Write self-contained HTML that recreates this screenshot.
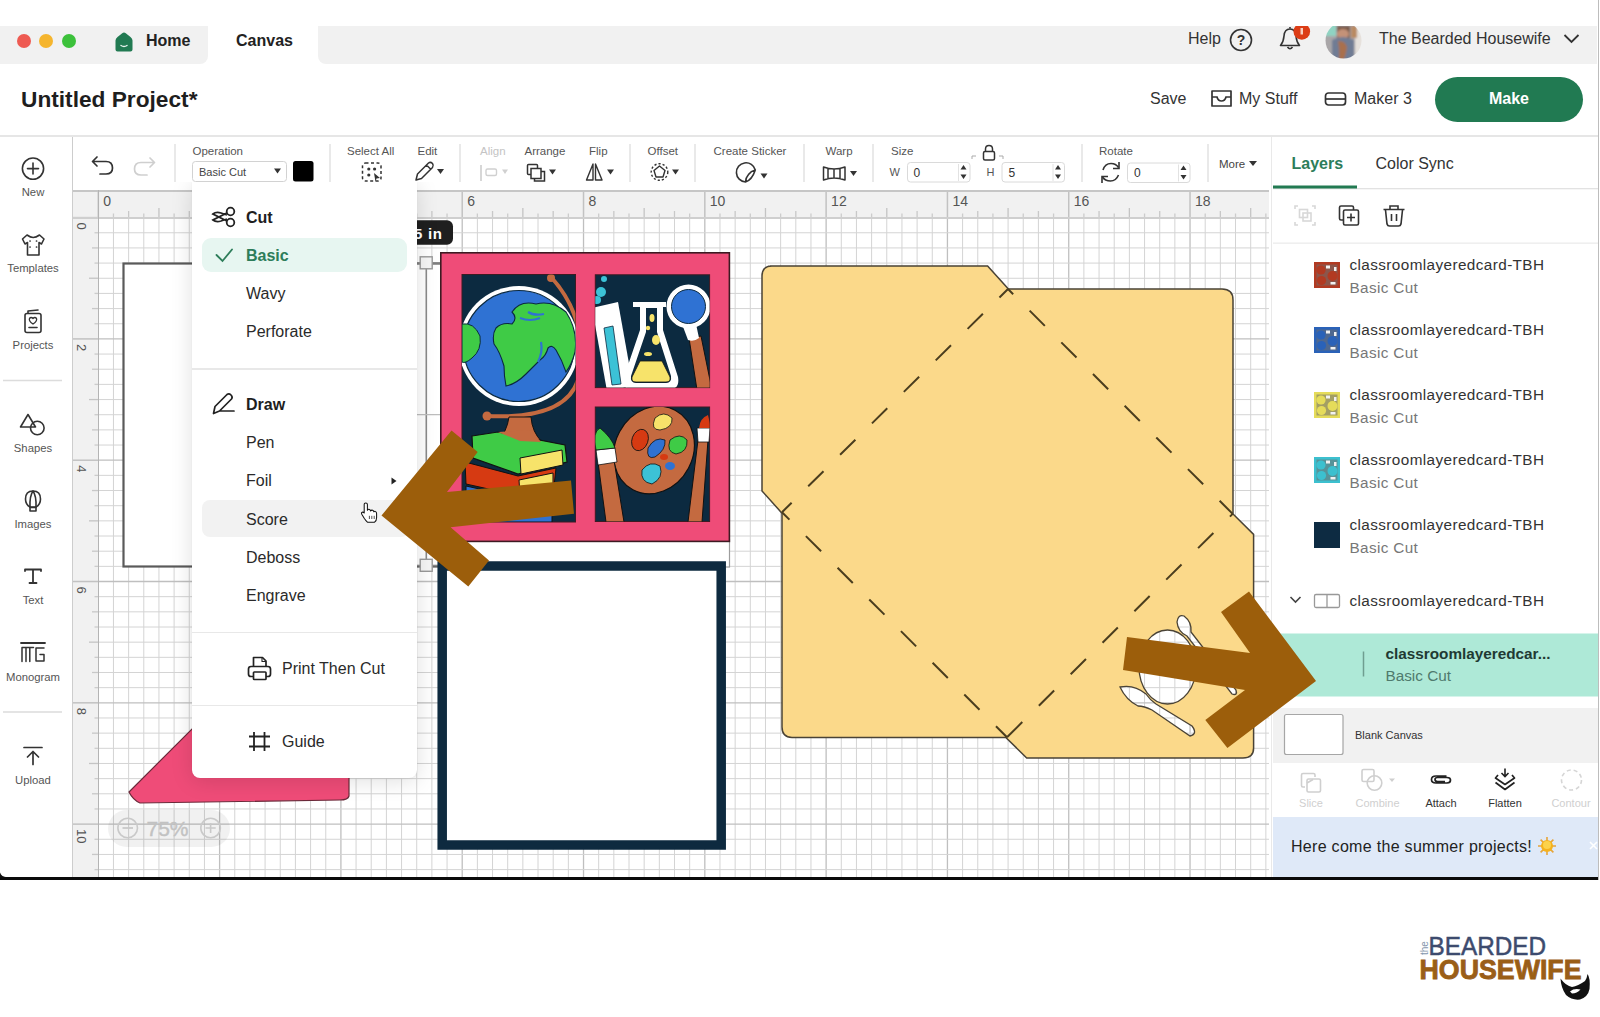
<!DOCTYPE html>
<html><head><meta charset="utf-8">
<style>
*{margin:0;padding:0;box-sizing:border-box}
html,body{width:1600px;height:1017px;overflow:hidden;background:#fff;font-family:"Liberation Sans",sans-serif;color:#222}
.a{position:absolute}
.t{position:absolute;white-space:nowrap;line-height:1}
svg{position:absolute;overflow:visible}
</style></head><body>
<!-- TAB BAR -->
<div class="a" style="left:0;top:26px;width:1599px;height:38px;background:#f1f1f1"></div>
<div class="a" style="left:208px;top:26px;width:110px;height:38px;background:#fff"></div>
<div class="a" style="left:200px;top:56px;width:8px;height:8px;background:#fff"></div>
<div class="a" style="left:200px;top:56px;width:8px;height:8px;background:#f1f1f1;border-bottom-right-radius:8px"></div>
<div class="a" style="left:318px;top:56px;width:8px;height:8px;background:#fff"></div>
<div class="a" style="left:318px;top:56px;width:8px;height:8px;background:#f1f1f1;border-bottom-left-radius:8px"></div>
<div class="a" style="left:1597px;top:0;width:3px;height:880px;background:#fff"></div>
<div class="a" style="left:1598px;top:0;width:1px;height:880px;background:#bdbdbd"></div>
<div class="a" style="left:17px;top:34px;width:14px;height:14px;border-radius:50%;background:#ee5a52"></div>
<div class="a" style="left:39px;top:34px;width:14px;height:14px;border-radius:50%;background:#f5b52e"></div>
<div class="a" style="left:62px;top:34px;width:14px;height:14px;border-radius:50%;background:#3cc13b"></div>
<svg style="left:113px;top:31px" width="22" height="22" viewBox="0 0 22 22"><path d="M2.5 9.5 Q2.5 7.5 4.5 6 L9.2 2.2 Q11 0.8 12.8 2.2 L17.5 6 Q19.5 7.5 19.5 9.5 V18.5 Q19.5 20.5 17.5 20.5 H4.5 Q2.5 20.5 2.5 18.5 Z" fill="#217a52"/><path d="M8 14.5 Q11 16.5 14 14.5" stroke="#e8f3ee" stroke-width="1.4" fill="none" stroke-linecap="round"/></svg>
<div class="t" style="left:146px;top:33px;font-size:16px;font-weight:bold;color:#222">Home</div>
<div class="t" style="left:236px;top:33px;font-size:16px;font-weight:bold;color:#222">Canvas</div>
<div class="t" style="left:1188px;top:31px;font-size:16px;color:#333">Help</div>
<svg style="left:1229px;top:28px" width="24" height="24" viewBox="0 0 24 24"><circle cx="12" cy="12" r="10.5" fill="none" stroke="#333" stroke-width="1.6"/><text x="12" y="17" text-anchor="middle" font-size="14" font-weight="bold" fill="#333" font-family="Liberation Sans">?</text></svg>
<svg style="left:1270px;top:20px" width="100" height="45" viewBox="1270 20 100 45">
<defs><clipPath id="bar"><rect x="1270" y="26" width="100" height="40"/></clipPath>
<clipPath id="av"><circle cx="1343.5" cy="40.5" r="18"/></clipPath>
<filter id="bl"><feGaussianBlur stdDeviation="1"/></filter></defs>
<g clip-path="url(#bar)">
<path d="M1280.5 45.5 Q1283.5 42 1284 36 Q1284.5 29 1290 29 Q1295.5 29 1296 36 Q1296.5 42 1299.5 45.5 Z" fill="none" stroke="#333" stroke-width="1.6" stroke-linejoin="round"/>
<path d="M1287.5 47 Q1290 50.5 1292.5 47" fill="none" stroke="#333" stroke-width="1.6"/>
<path d="M1290 28.5 V27" stroke="#333" stroke-width="1.6"/>
<circle cx="1301.8" cy="31.5" r="8.3" fill="#dc3d16"/>
<path d="M1300.5 28 h2.5 v6.5 h-2.5z" fill="#f7d0c0"/>
<g clip-path="url(#av)"><g filter="url(#bl)">
<rect x="1324" y="20" width="40" height="42" fill="#a9a6a8"/>
<rect x="1324" y="20" width="12" height="16" fill="#8fd3c2"/>
<rect x="1355" y="26" width="10" height="32" fill="#e6e1dc"/>
<rect x="1351" y="26" width="6" height="12" fill="#b98a62"/>
<rect x="1337" y="26" width="13" height="12" fill="#7a5a48"/>
<ellipse cx="1343" cy="34" rx="6" ry="5" fill="#c49278"/>
<path d="M1332 40 Q1343 34 1354 40 V60 H1332 Z" fill="#6f7c94"/>
<path d="M1338 41 Q1345 40 1347 47 Q1346 56 1343 60 H1339 Q1340 50 1338 41 Z" fill="#a9704e"/>
</g></g>
</g>
</svg>
<div class="t" style="left:1379px;top:31px;font-size:16px;color:#333">The Bearded Housewife</div>
<svg style="left:1563px;top:33px" width="17" height="11" viewBox="0 0 17 11"><path d="M1.5 2 L8.5 9 L15.5 2" fill="none" stroke="#333" stroke-width="1.8"/></svg>

<!-- HEADER -->
<div class="t" style="left:21px;top:88px;font-size:22.7px;font-weight:bold;color:#1e1e1e">Untitled Project*</div>
<div class="t" style="left:1150px;top:91px;font-size:16px;color:#333">Save</div>
<svg style="left:1210px;top:89px" width="23" height="19" viewBox="0 0 23 19"><path d="M2 2 H21 V17 H2 Z" fill="none" stroke="#333" stroke-width="1.7" stroke-linejoin="round"/><path d="M2 8 H7 Q8 12 11.5 12 Q15 12 16 8 H21" fill="none" stroke="#333" stroke-width="1.7"/></svg>
<div class="t" style="left:1239px;top:91px;font-size:16px;color:#333">My Stuff</div>
<svg style="left:1324px;top:91px" width="23" height="16" viewBox="0 0 23 16"><rect x="1.5" y="2" width="20" height="12" rx="3" fill="none" stroke="#333" stroke-width="1.7"/><path d="M1.5 8 H21.5" stroke="#333" stroke-width="1.7"/></svg>
<div class="t" style="left:1354px;top:91px;font-size:16px;color:#333">Maker 3</div>
<div class="a" style="left:1435px;top:77px;width:148px;height:45px;border-radius:23px;background:#217a52"></div>
<div class="t" style="left:1435px;top:91px;width:148px;text-align:center;font-size:16px;font-weight:bold;color:#fff">Make</div>
<div class="a" style="left:0;top:135px;width:1598px;height:2px;background:#e6e6e6"></div>

<!-- LEFT SIDEBAR -->
<div class="a" style="left:72px;top:137px;width:1.2px;height:740px;background:#cdcdcd"></div>
<svg style="left:0;top:136px" width="72" height="741" viewBox="0 136 72 741" font-family="Liberation Sans">
<g fill="none" stroke="#333" stroke-width="1.6" stroke-linejoin="round" stroke-linecap="round">
  <circle cx="33" cy="168.6" r="10.6"/>
  <path d="M27.5 168.6 H38.5 M33 163 V174"/>
  <path d="M27 235 L22.5 239 L25 244 L27.5 242.5 V255 H39 V242.5 L41.5 244 L44 239 L39.5 235 Q36 237.5 33.2 237.5 Q30.5 237.5 27 235 Z"/>
  <path d="M30 241 h0.1 M36.5 241 h0.1 M30 247 h0.1 M36.5 247 h0.1" stroke-width="1.7"/>
  <rect x="25" y="313.5" width="16" height="19" rx="2"/>
  <path d="M28 313 L28 311 L38 310" />
  <path d="M29 327.5 H37"/>
  <path d="M33 324 Q28.5 321 29.5 318.5 Q31 316.5 33 318.5 Q35 316.5 36.5 318.5 Q37.5 321 33 324 Z" stroke-width="1.3"/>
  <path d="M28 414.5 L20.5 427 H35.5 Z"/>
  <circle cx="37.3" cy="428" r="6.8"/>
  <path d="M33 491 Q25.5 491 25.5 499 Q25.5 504.5 30 507 H36 Q40.5 504.5 40.5 499 Q40.5 491 33 491 Z"/>
  <path d="M33 491 Q29.5 496 30 507 M33 491 Q36.5 496 36 507"/>
  <path d="M30 507.5 H36 V511 H30 Z"/>
  <path d="M25 571 V569.5 H41 V571 M33 569.5 V583 M29.5 583 H36.5" stroke-width="1.8"/>
  <path d="M21 643 H45" stroke-width="1.8"/>
  <path d="M22 661.5 V647.5 H33.5 M26 661.5 V648 M29.8 661.5 V648 M22 661.5 h0" stroke-width="1.5"/>
  <path d="M44 648 H36 V661 H44 V654.5 H40" stroke-width="1.5"/>
  <path d="M24 747.5 H42" stroke-width="1.7"/>
  <path d="M33 764.5 V752 M27.5 757 L33 751.5 L38.5 757" stroke-width="1.7"/>
</g>
<g fill="#555" font-size="11.3" text-anchor="middle">
  <text x="33" y="196.3">New</text>
  <text x="33" y="272">Templates</text>
  <text x="33" y="348.5">Projects</text>
  <text x="33" y="451.5">Shapes</text>
  <text x="33" y="527.5">Images</text>
  <text x="33" y="604">Text</text>
  <text x="33" y="680.5">Monogram</text>
  <text x="33" y="783.5">Upload</text>
</g>
<path d="M3 380.5 H62 M3 712 H62" stroke="#dcdcdc" stroke-width="1.3"/>
</svg>


<!-- TOOLBAR -->
<svg style="left:73px;top:137px" width="1199" height="53" viewBox="73 137 1199 53" font-family="Liberation Sans">
<path d="M175 144 V182 M330 144 V182 M460 144 V182 M630 144 V182 M695 144 V182 M804 144 V182 M873 144 V182 M1082 144 V182 M1208 144 V182" stroke="#dedede" stroke-width="1.3"/>
<g fill="#555" font-size="11.5">
  <text x="192.5" y="154.5">Operation</text>
  <text x="347" y="154.5">Select All</text>
  <text x="417.5" y="154.5">Edit</text>
  <text x="480" y="154.5" fill="#c4c4c4">Align</text>
  <text x="524.5" y="154.5">Arrange</text>
  <text x="589" y="154.5">Flip</text>
  <text x="647.5" y="154.5">Offset</text>
  <text x="713.5" y="154.5">Create Sticker</text>
  <text x="825.5" y="154.5">Warp</text>
  <text x="891" y="154.5">Size</text>
  <text x="1099" y="154.5">Rotate</text>
  <text x="1219" y="167.5" fill="#444">More</text>
</g>
<!-- undo / redo -->
<path d="M97 162 L92.5 166.5 L97 171 M93 166.5 H106 Q112.5 166.5 112.5 173 Q112.5 179 106 179 H100" fill="none" stroke="#333" stroke-width="1.7" stroke-linecap="round" stroke-linejoin="round" transform="translate(0 -5)"/>
<path d="M150 158 L154.5 162.5 L150 167 M154 162.5 H141 Q134.5 162.5 134.5 169 Q134.5 175 141 175 H147" fill="none" stroke="#cfcfcf" stroke-width="1.7" stroke-linecap="round" stroke-linejoin="round"/>
<!-- operation dropdown -->
<rect x="192.5" y="161.5" width="94" height="20" rx="3" fill="#fff" stroke="#d2d2d2" stroke-width="1"/>
<text x="199" y="175.5" font-size="11" fill="#444">Basic Cut</text>
<path d="M274 168.5 H281 L277.5 173.5 Z" fill="#333"/>
<rect x="293" y="161" width="20.5" height="20.5" rx="2.5" fill="#000"/>
<!-- select all -->
<rect x="362.5" y="163" width="18.5" height="18" rx="3" fill="none" stroke="#333" stroke-width="1.5" stroke-dasharray="3 2.5"/>
<circle cx="368.8" cy="169" r="1.6" fill="#333"/><circle cx="374.6" cy="169" r="1.6" fill="#333"/><circle cx="368.8" cy="175" r="1.6" fill="#333"/>
<path d="M374 173 L380 178 L376.5 178.5 L375.5 182 Z" fill="#333"/>
<!-- edit pencil -->
<path d="M416 180 L417.5 174 L428.5 163 Q430.5 161.5 432.5 163.5 Q434 165.5 432.5 167.5 L421.5 178.5 Z M426.5 165 L430.5 169" fill="none" stroke="#333" stroke-width="1.5" stroke-linejoin="round"/>
<path d="M437 169 H444 L440.5 174 Z" fill="#333"/>
<!-- align -->
<path d="M481 165 V181" stroke="#d0d0d0" stroke-width="1.7"/>
<rect x="486" y="169" width="10.5" height="6.5" rx="1.5" fill="none" stroke="#d0d0d0" stroke-width="1.4"/>
<path d="M502 169.5 H508 L505 174 Z" fill="#d0d0d0"/>
<!-- arrange -->
<rect x="527.5" y="164.5" width="10" height="10" rx="1" fill="none" stroke="#333" stroke-width="1.5"/>
<path d="M531 168.5 H541 V178.5 H531 Z" fill="#fff" stroke="#333" stroke-width="1.5"/>
<path d="M534.5 178.5 V181 H544.5 V171.5 H541" fill="none" stroke="#333" stroke-width="1.5"/>
<path d="M549 169.5 H556 L552.5 174.5 Z" fill="#333"/>
<!-- flip -->
<path d="M593 164 L586.5 180 H593 Z M595.5 164 L602 180 H595.5 Z" fill="none" stroke="#333" stroke-width="1.4" stroke-linejoin="round"/>
<path d="M607 169.5 H614 L610.5 174.5 Z" fill="#333"/>
<!-- offset -->
<path d="M659.5 166 L665 170.5 L663 177 H656 L654 170.5 Z" fill="none" stroke="#333" stroke-width="1.4" stroke-linejoin="round"/>
<circle cx="659.5" cy="172" r="8.3" fill="none" stroke="#333" stroke-width="1.4" stroke-dasharray="2.2 2"/>
<path d="M672 169.5 H679 L675.5 174.5 Z" fill="#333"/>
<!-- create sticker -->
<path d="M745.5 182 A9.6 9.6 0 1 1 755.3 170 Q751 171 748.5 174.5 Q745.5 178 745.5 182 Z M745.5 182 Q752 180 755.3 170" fill="none" stroke="#333" stroke-width="1.6" stroke-linejoin="round"/>
<path d="M760.5 173.5 H767.5 L764 178.5 Z" fill="#333"/>
<!-- warp -->
<path d="M823.5 167 Q834 171 845 167 V180 Q834 176 823.5 180 Z M823.5 167 V180 M828 168.5 V178.5 M834 169.5 V177.5 M840 168.5 V178.5" fill="none" stroke="#333" stroke-width="1.5" stroke-linejoin="round"/>
<path d="M850 171 H857 L853.5 176 Z" fill="#333"/>
<!-- size -->
<text x="889.5" y="175.5" font-size="11" fill="#555">W</text>
<rect x="907.5" y="162.5" width="62.5" height="19.5" rx="3" fill="#fff" stroke="#dadada"/>
<text x="913.5" y="176.5" font-size="12" fill="#333">0</text>
<path d="M958.5 164 V181" stroke="#e2e2e2"/>
<path d="M960.5 169.5 L963.5 165 L966.5 169.5 Z M960.5 174.5 L963.5 179 L966.5 174.5 Z" fill="#333"/>
<path d="M972 159 V156 H976 M999 156 H1003 V159" fill="none" stroke="#aaa" stroke-width="1"/>
<rect x="983.5" y="151.5" width="11" height="8.5" rx="1.5" fill="none" stroke="#333" stroke-width="1.5"/>
<path d="M985.5 151.5 V149 Q985.5 145.5 989 145.5 Q992.5 145.5 992.5 149 V151.5" fill="none" stroke="#333" stroke-width="1.5"/>
<text x="986.5" y="175.5" font-size="11" fill="#555">H</text>
<rect x="1002" y="162.5" width="62.5" height="19.5" rx="3" fill="#fff" stroke="#dadada"/>
<text x="1008.5" y="176.5" font-size="12" fill="#333">5</text>
<path d="M1053 164 V181" stroke="#e2e2e2"/>
<path d="M1055 169.5 L1058 165 L1061 169.5 Z M1055 174.5 L1058 179 L1061 174.5 Z" fill="#333"/>
<!-- rotate -->
<path d="M1103 170 Q1105 163.5 1111 163.5 Q1116 163.5 1118.5 167.5 M1118.5 175 Q1116 181 1110.5 181 Q1105 181 1102.5 177" fill="none" stroke="#333" stroke-width="1.6"/>
<path d="M1119 162 V168.5 H1113 M1102 183 V176.5 H1108" fill="none" stroke="#333" stroke-width="1.6"/>
<rect x="1127.5" y="163" width="62.5" height="19.5" rx="3" fill="#fff" stroke="#dadada"/>
<text x="1134" y="177" font-size="12" fill="#333">0</text>
<path d="M1178.5 164.5 V181.5" stroke="#e2e2e2"/>
<path d="M1180.5 170 L1183.5 165.5 L1186.5 170 Z M1180.5 175 L1183.5 179.5 L1186.5 175 Z" fill="#333"/>
<path d="M1249 161 H1257 L1253 166 Z" fill="#333"/>
</svg>


<!-- CANVAS -->
<div class="a" style="left:73px;top:190px;width:1195.5px;height:687px;background:#fff;overflow:hidden">
  <svg style="left:-1px;top:0" width="1200" height="700"><line x1="26.30" y1="0" x2="26.30" y2="700" stroke="#bfbfbf" stroke-width="1.3"/>
<line x1="41.46" y1="0" x2="41.46" y2="700" stroke="#d4d4d4" stroke-width="1"/>
<line x1="56.63" y1="0" x2="56.63" y2="700" stroke="#d4d4d4" stroke-width="1"/>
<line x1="71.79" y1="0" x2="71.79" y2="700" stroke="#d4d4d4" stroke-width="1"/>
<line x1="86.95" y1="0" x2="86.95" y2="700" stroke="#d4d4d4" stroke-width="1"/>
<line x1="102.12" y1="0" x2="102.12" y2="700" stroke="#d4d4d4" stroke-width="1"/>
<line x1="117.28" y1="0" x2="117.28" y2="700" stroke="#d4d4d4" stroke-width="1"/>
<line x1="132.44" y1="0" x2="132.44" y2="700" stroke="#d4d4d4" stroke-width="1"/>
<line x1="147.60" y1="0" x2="147.60" y2="700" stroke="#bfbfbf" stroke-width="1.3"/>
<line x1="162.77" y1="0" x2="162.77" y2="700" stroke="#d4d4d4" stroke-width="1"/>
<line x1="177.93" y1="0" x2="177.93" y2="700" stroke="#d4d4d4" stroke-width="1"/>
<line x1="193.09" y1="0" x2="193.09" y2="700" stroke="#d4d4d4" stroke-width="1"/>
<line x1="208.26" y1="0" x2="208.26" y2="700" stroke="#d4d4d4" stroke-width="1"/>
<line x1="223.42" y1="0" x2="223.42" y2="700" stroke="#d4d4d4" stroke-width="1"/>
<line x1="238.58" y1="0" x2="238.58" y2="700" stroke="#d4d4d4" stroke-width="1"/>
<line x1="253.75" y1="0" x2="253.75" y2="700" stroke="#d4d4d4" stroke-width="1"/>
<line x1="268.91" y1="0" x2="268.91" y2="700" stroke="#bfbfbf" stroke-width="1.3"/>
<line x1="284.07" y1="0" x2="284.07" y2="700" stroke="#d4d4d4" stroke-width="1"/>
<line x1="299.23" y1="0" x2="299.23" y2="700" stroke="#d4d4d4" stroke-width="1"/>
<line x1="314.40" y1="0" x2="314.40" y2="700" stroke="#d4d4d4" stroke-width="1"/>
<line x1="329.56" y1="0" x2="329.56" y2="700" stroke="#d4d4d4" stroke-width="1"/>
<line x1="344.72" y1="0" x2="344.72" y2="700" stroke="#d4d4d4" stroke-width="1"/>
<line x1="359.89" y1="0" x2="359.89" y2="700" stroke="#d4d4d4" stroke-width="1"/>
<line x1="375.05" y1="0" x2="375.05" y2="700" stroke="#d4d4d4" stroke-width="1"/>
<line x1="390.21" y1="0" x2="390.21" y2="700" stroke="#bfbfbf" stroke-width="1.3"/>
<line x1="405.38" y1="0" x2="405.38" y2="700" stroke="#d4d4d4" stroke-width="1"/>
<line x1="420.54" y1="0" x2="420.54" y2="700" stroke="#d4d4d4" stroke-width="1"/>
<line x1="435.70" y1="0" x2="435.70" y2="700" stroke="#d4d4d4" stroke-width="1"/>
<line x1="450.86" y1="0" x2="450.86" y2="700" stroke="#d4d4d4" stroke-width="1"/>
<line x1="466.03" y1="0" x2="466.03" y2="700" stroke="#d4d4d4" stroke-width="1"/>
<line x1="481.19" y1="0" x2="481.19" y2="700" stroke="#d4d4d4" stroke-width="1"/>
<line x1="496.35" y1="0" x2="496.35" y2="700" stroke="#d4d4d4" stroke-width="1"/>
<line x1="511.52" y1="0" x2="511.52" y2="700" stroke="#bfbfbf" stroke-width="1.3"/>
<line x1="526.68" y1="0" x2="526.68" y2="700" stroke="#d4d4d4" stroke-width="1"/>
<line x1="541.84" y1="0" x2="541.84" y2="700" stroke="#d4d4d4" stroke-width="1"/>
<line x1="557.00" y1="0" x2="557.00" y2="700" stroke="#d4d4d4" stroke-width="1"/>
<line x1="572.17" y1="0" x2="572.17" y2="700" stroke="#d4d4d4" stroke-width="1"/>
<line x1="587.33" y1="0" x2="587.33" y2="700" stroke="#d4d4d4" stroke-width="1"/>
<line x1="602.49" y1="0" x2="602.49" y2="700" stroke="#d4d4d4" stroke-width="1"/>
<line x1="617.66" y1="0" x2="617.66" y2="700" stroke="#d4d4d4" stroke-width="1"/>
<line x1="632.82" y1="0" x2="632.82" y2="700" stroke="#bfbfbf" stroke-width="1.3"/>
<line x1="647.98" y1="0" x2="647.98" y2="700" stroke="#d4d4d4" stroke-width="1"/>
<line x1="663.15" y1="0" x2="663.15" y2="700" stroke="#d4d4d4" stroke-width="1"/>
<line x1="678.31" y1="0" x2="678.31" y2="700" stroke="#d4d4d4" stroke-width="1"/>
<line x1="693.47" y1="0" x2="693.47" y2="700" stroke="#d4d4d4" stroke-width="1"/>
<line x1="708.63" y1="0" x2="708.63" y2="700" stroke="#d4d4d4" stroke-width="1"/>
<line x1="723.80" y1="0" x2="723.80" y2="700" stroke="#d4d4d4" stroke-width="1"/>
<line x1="738.96" y1="0" x2="738.96" y2="700" stroke="#d4d4d4" stroke-width="1"/>
<line x1="754.12" y1="0" x2="754.12" y2="700" stroke="#bfbfbf" stroke-width="1.3"/>
<line x1="769.29" y1="0" x2="769.29" y2="700" stroke="#d4d4d4" stroke-width="1"/>
<line x1="784.45" y1="0" x2="784.45" y2="700" stroke="#d4d4d4" stroke-width="1"/>
<line x1="799.61" y1="0" x2="799.61" y2="700" stroke="#d4d4d4" stroke-width="1"/>
<line x1="814.78" y1="0" x2="814.78" y2="700" stroke="#d4d4d4" stroke-width="1"/>
<line x1="829.94" y1="0" x2="829.94" y2="700" stroke="#d4d4d4" stroke-width="1"/>
<line x1="845.10" y1="0" x2="845.10" y2="700" stroke="#d4d4d4" stroke-width="1"/>
<line x1="860.26" y1="0" x2="860.26" y2="700" stroke="#d4d4d4" stroke-width="1"/>
<line x1="875.43" y1="0" x2="875.43" y2="700" stroke="#bfbfbf" stroke-width="1.3"/>
<line x1="890.59" y1="0" x2="890.59" y2="700" stroke="#d4d4d4" stroke-width="1"/>
<line x1="905.75" y1="0" x2="905.75" y2="700" stroke="#d4d4d4" stroke-width="1"/>
<line x1="920.92" y1="0" x2="920.92" y2="700" stroke="#d4d4d4" stroke-width="1"/>
<line x1="936.08" y1="0" x2="936.08" y2="700" stroke="#d4d4d4" stroke-width="1"/>
<line x1="951.24" y1="0" x2="951.24" y2="700" stroke="#d4d4d4" stroke-width="1"/>
<line x1="966.41" y1="0" x2="966.41" y2="700" stroke="#d4d4d4" stroke-width="1"/>
<line x1="981.57" y1="0" x2="981.57" y2="700" stroke="#d4d4d4" stroke-width="1"/>
<line x1="996.73" y1="0" x2="996.73" y2="700" stroke="#bfbfbf" stroke-width="1.3"/>
<line x1="1011.89" y1="0" x2="1011.89" y2="700" stroke="#d4d4d4" stroke-width="1"/>
<line x1="1027.06" y1="0" x2="1027.06" y2="700" stroke="#d4d4d4" stroke-width="1"/>
<line x1="1042.22" y1="0" x2="1042.22" y2="700" stroke="#d4d4d4" stroke-width="1"/>
<line x1="1057.38" y1="0" x2="1057.38" y2="700" stroke="#d4d4d4" stroke-width="1"/>
<line x1="1072.55" y1="0" x2="1072.55" y2="700" stroke="#d4d4d4" stroke-width="1"/>
<line x1="1087.71" y1="0" x2="1087.71" y2="700" stroke="#d4d4d4" stroke-width="1"/>
<line x1="1102.87" y1="0" x2="1102.87" y2="700" stroke="#d4d4d4" stroke-width="1"/>
<line x1="1118.04" y1="0" x2="1118.04" y2="700" stroke="#bfbfbf" stroke-width="1.3"/>
<line x1="1133.20" y1="0" x2="1133.20" y2="700" stroke="#d4d4d4" stroke-width="1"/>
<line x1="1148.36" y1="0" x2="1148.36" y2="700" stroke="#d4d4d4" stroke-width="1"/>
<line x1="1163.52" y1="0" x2="1163.52" y2="700" stroke="#d4d4d4" stroke-width="1"/>
<line x1="1178.69" y1="0" x2="1178.69" y2="700" stroke="#d4d4d4" stroke-width="1"/>
<line x1="1193.85" y1="0" x2="1193.85" y2="700" stroke="#d4d4d4" stroke-width="1"/>
<line x1="0" y1="27.60" x2="1200" y2="27.60" stroke="#bfbfbf" stroke-width="1.3"/>
<line x1="0" y1="42.76" x2="1200" y2="42.76" stroke="#d4d4d4" stroke-width="1"/>
<line x1="0" y1="57.93" x2="1200" y2="57.93" stroke="#d4d4d4" stroke-width="1"/>
<line x1="0" y1="73.09" x2="1200" y2="73.09" stroke="#d4d4d4" stroke-width="1"/>
<line x1="0" y1="88.25" x2="1200" y2="88.25" stroke="#d4d4d4" stroke-width="1"/>
<line x1="0" y1="103.41" x2="1200" y2="103.41" stroke="#d4d4d4" stroke-width="1"/>
<line x1="0" y1="118.58" x2="1200" y2="118.58" stroke="#d4d4d4" stroke-width="1"/>
<line x1="0" y1="133.74" x2="1200" y2="133.74" stroke="#d4d4d4" stroke-width="1"/>
<line x1="0" y1="148.90" x2="1200" y2="148.90" stroke="#bfbfbf" stroke-width="1.3"/>
<line x1="0" y1="164.07" x2="1200" y2="164.07" stroke="#d4d4d4" stroke-width="1"/>
<line x1="0" y1="179.23" x2="1200" y2="179.23" stroke="#d4d4d4" stroke-width="1"/>
<line x1="0" y1="194.39" x2="1200" y2="194.39" stroke="#d4d4d4" stroke-width="1"/>
<line x1="0" y1="209.56" x2="1200" y2="209.56" stroke="#d4d4d4" stroke-width="1"/>
<line x1="0" y1="224.72" x2="1200" y2="224.72" stroke="#d4d4d4" stroke-width="1"/>
<line x1="0" y1="239.88" x2="1200" y2="239.88" stroke="#d4d4d4" stroke-width="1"/>
<line x1="0" y1="255.04" x2="1200" y2="255.04" stroke="#d4d4d4" stroke-width="1"/>
<line x1="0" y1="270.21" x2="1200" y2="270.21" stroke="#bfbfbf" stroke-width="1.3"/>
<line x1="0" y1="285.37" x2="1200" y2="285.37" stroke="#d4d4d4" stroke-width="1"/>
<line x1="0" y1="300.53" x2="1200" y2="300.53" stroke="#d4d4d4" stroke-width="1"/>
<line x1="0" y1="315.70" x2="1200" y2="315.70" stroke="#d4d4d4" stroke-width="1"/>
<line x1="0" y1="330.86" x2="1200" y2="330.86" stroke="#d4d4d4" stroke-width="1"/>
<line x1="0" y1="346.02" x2="1200" y2="346.02" stroke="#d4d4d4" stroke-width="1"/>
<line x1="0" y1="361.19" x2="1200" y2="361.19" stroke="#d4d4d4" stroke-width="1"/>
<line x1="0" y1="376.35" x2="1200" y2="376.35" stroke="#d4d4d4" stroke-width="1"/>
<line x1="0" y1="391.51" x2="1200" y2="391.51" stroke="#bfbfbf" stroke-width="1.3"/>
<line x1="0" y1="406.67" x2="1200" y2="406.67" stroke="#d4d4d4" stroke-width="1"/>
<line x1="0" y1="421.84" x2="1200" y2="421.84" stroke="#d4d4d4" stroke-width="1"/>
<line x1="0" y1="437.00" x2="1200" y2="437.00" stroke="#d4d4d4" stroke-width="1"/>
<line x1="0" y1="452.16" x2="1200" y2="452.16" stroke="#d4d4d4" stroke-width="1"/>
<line x1="0" y1="467.33" x2="1200" y2="467.33" stroke="#d4d4d4" stroke-width="1"/>
<line x1="0" y1="482.49" x2="1200" y2="482.49" stroke="#d4d4d4" stroke-width="1"/>
<line x1="0" y1="497.65" x2="1200" y2="497.65" stroke="#d4d4d4" stroke-width="1"/>
<line x1="0" y1="512.82" x2="1200" y2="512.82" stroke="#bfbfbf" stroke-width="1.3"/>
<line x1="0" y1="527.98" x2="1200" y2="527.98" stroke="#d4d4d4" stroke-width="1"/>
<line x1="0" y1="543.14" x2="1200" y2="543.14" stroke="#d4d4d4" stroke-width="1"/>
<line x1="0" y1="558.31" x2="1200" y2="558.31" stroke="#d4d4d4" stroke-width="1"/>
<line x1="0" y1="573.47" x2="1200" y2="573.47" stroke="#d4d4d4" stroke-width="1"/>
<line x1="0" y1="588.63" x2="1200" y2="588.63" stroke="#d4d4d4" stroke-width="1"/>
<line x1="0" y1="603.79" x2="1200" y2="603.79" stroke="#d4d4d4" stroke-width="1"/>
<line x1="0" y1="618.96" x2="1200" y2="618.96" stroke="#d4d4d4" stroke-width="1"/>
<line x1="0" y1="634.12" x2="1200" y2="634.12" stroke="#bfbfbf" stroke-width="1.3"/>
<line x1="0" y1="649.28" x2="1200" y2="649.28" stroke="#d4d4d4" stroke-width="1"/>
<line x1="0" y1="664.45" x2="1200" y2="664.45" stroke="#d4d4d4" stroke-width="1"/>
<line x1="0" y1="679.61" x2="1200" y2="679.61" stroke="#d4d4d4" stroke-width="1"/></svg>
  <div class="a" style="left:0;top:0;width:1199px;height:28px;background:#f1f1f1"></div>
  <div class="a" style="left:0;top:0;width:26px;height:687px;background:#f1f1f1"></div>
  <svg style="left:-1px;top:0" width="1200" height="28"><line x1="26.30" y1="0" x2="26.30" y2="28" stroke="#c2c2c2" stroke-width="1.5"/>
<text x="31.30" y="15.5" font-size="14" fill="#555">0</text>
<line x1="41.46" y1="23.5" x2="41.46" y2="28" stroke="#cccccc" stroke-width="1.3"/>
<line x1="56.63" y1="21" x2="56.63" y2="28" stroke="#c8c8c8" stroke-width="1.3"/>
<line x1="71.79" y1="23.5" x2="71.79" y2="28" stroke="#cccccc" stroke-width="1.3"/>
<line x1="86.95" y1="18" x2="86.95" y2="28" stroke="#c4c4c4" stroke-width="1.3"/>
<line x1="102.12" y1="23.5" x2="102.12" y2="28" stroke="#cccccc" stroke-width="1.3"/>
<line x1="117.28" y1="21" x2="117.28" y2="28" stroke="#c8c8c8" stroke-width="1.3"/>
<line x1="132.44" y1="23.5" x2="132.44" y2="28" stroke="#cccccc" stroke-width="1.3"/>
<line x1="147.60" y1="0" x2="147.60" y2="28" stroke="#c2c2c2" stroke-width="1.5"/>
<text x="152.60" y="15.5" font-size="14" fill="#555">2</text>
<line x1="162.77" y1="23.5" x2="162.77" y2="28" stroke="#cccccc" stroke-width="1.3"/>
<line x1="177.93" y1="21" x2="177.93" y2="28" stroke="#c8c8c8" stroke-width="1.3"/>
<line x1="193.09" y1="23.5" x2="193.09" y2="28" stroke="#cccccc" stroke-width="1.3"/>
<line x1="208.26" y1="18" x2="208.26" y2="28" stroke="#c4c4c4" stroke-width="1.3"/>
<line x1="223.42" y1="23.5" x2="223.42" y2="28" stroke="#cccccc" stroke-width="1.3"/>
<line x1="238.58" y1="21" x2="238.58" y2="28" stroke="#c8c8c8" stroke-width="1.3"/>
<line x1="253.75" y1="23.5" x2="253.75" y2="28" stroke="#cccccc" stroke-width="1.3"/>
<line x1="268.91" y1="0" x2="268.91" y2="28" stroke="#c2c2c2" stroke-width="1.5"/>
<text x="273.91" y="15.5" font-size="14" fill="#555">4</text>
<line x1="284.07" y1="23.5" x2="284.07" y2="28" stroke="#cccccc" stroke-width="1.3"/>
<line x1="299.23" y1="21" x2="299.23" y2="28" stroke="#c8c8c8" stroke-width="1.3"/>
<line x1="314.40" y1="23.5" x2="314.40" y2="28" stroke="#cccccc" stroke-width="1.3"/>
<line x1="329.56" y1="18" x2="329.56" y2="28" stroke="#c4c4c4" stroke-width="1.3"/>
<line x1="344.72" y1="23.5" x2="344.72" y2="28" stroke="#cccccc" stroke-width="1.3"/>
<line x1="359.89" y1="21" x2="359.89" y2="28" stroke="#c8c8c8" stroke-width="1.3"/>
<line x1="375.05" y1="23.5" x2="375.05" y2="28" stroke="#cccccc" stroke-width="1.3"/>
<line x1="390.21" y1="0" x2="390.21" y2="28" stroke="#c2c2c2" stroke-width="1.5"/>
<text x="395.21" y="15.5" font-size="14" fill="#555">6</text>
<line x1="405.38" y1="23.5" x2="405.38" y2="28" stroke="#cccccc" stroke-width="1.3"/>
<line x1="420.54" y1="21" x2="420.54" y2="28" stroke="#c8c8c8" stroke-width="1.3"/>
<line x1="435.70" y1="23.5" x2="435.70" y2="28" stroke="#cccccc" stroke-width="1.3"/>
<line x1="450.86" y1="18" x2="450.86" y2="28" stroke="#c4c4c4" stroke-width="1.3"/>
<line x1="466.03" y1="23.5" x2="466.03" y2="28" stroke="#cccccc" stroke-width="1.3"/>
<line x1="481.19" y1="21" x2="481.19" y2="28" stroke="#c8c8c8" stroke-width="1.3"/>
<line x1="496.35" y1="23.5" x2="496.35" y2="28" stroke="#cccccc" stroke-width="1.3"/>
<line x1="511.52" y1="0" x2="511.52" y2="28" stroke="#c2c2c2" stroke-width="1.5"/>
<text x="516.52" y="15.5" font-size="14" fill="#555">8</text>
<line x1="526.68" y1="23.5" x2="526.68" y2="28" stroke="#cccccc" stroke-width="1.3"/>
<line x1="541.84" y1="21" x2="541.84" y2="28" stroke="#c8c8c8" stroke-width="1.3"/>
<line x1="557.00" y1="23.5" x2="557.00" y2="28" stroke="#cccccc" stroke-width="1.3"/>
<line x1="572.17" y1="18" x2="572.17" y2="28" stroke="#c4c4c4" stroke-width="1.3"/>
<line x1="587.33" y1="23.5" x2="587.33" y2="28" stroke="#cccccc" stroke-width="1.3"/>
<line x1="602.49" y1="21" x2="602.49" y2="28" stroke="#c8c8c8" stroke-width="1.3"/>
<line x1="617.66" y1="23.5" x2="617.66" y2="28" stroke="#cccccc" stroke-width="1.3"/>
<line x1="632.82" y1="0" x2="632.82" y2="28" stroke="#c2c2c2" stroke-width="1.5"/>
<text x="637.82" y="15.5" font-size="14" fill="#555">10</text>
<line x1="647.98" y1="23.5" x2="647.98" y2="28" stroke="#cccccc" stroke-width="1.3"/>
<line x1="663.15" y1="21" x2="663.15" y2="28" stroke="#c8c8c8" stroke-width="1.3"/>
<line x1="678.31" y1="23.5" x2="678.31" y2="28" stroke="#cccccc" stroke-width="1.3"/>
<line x1="693.47" y1="18" x2="693.47" y2="28" stroke="#c4c4c4" stroke-width="1.3"/>
<line x1="708.63" y1="23.5" x2="708.63" y2="28" stroke="#cccccc" stroke-width="1.3"/>
<line x1="723.80" y1="21" x2="723.80" y2="28" stroke="#c8c8c8" stroke-width="1.3"/>
<line x1="738.96" y1="23.5" x2="738.96" y2="28" stroke="#cccccc" stroke-width="1.3"/>
<line x1="754.12" y1="0" x2="754.12" y2="28" stroke="#c2c2c2" stroke-width="1.5"/>
<text x="759.12" y="15.5" font-size="14" fill="#555">12</text>
<line x1="769.29" y1="23.5" x2="769.29" y2="28" stroke="#cccccc" stroke-width="1.3"/>
<line x1="784.45" y1="21" x2="784.45" y2="28" stroke="#c8c8c8" stroke-width="1.3"/>
<line x1="799.61" y1="23.5" x2="799.61" y2="28" stroke="#cccccc" stroke-width="1.3"/>
<line x1="814.78" y1="18" x2="814.78" y2="28" stroke="#c4c4c4" stroke-width="1.3"/>
<line x1="829.94" y1="23.5" x2="829.94" y2="28" stroke="#cccccc" stroke-width="1.3"/>
<line x1="845.10" y1="21" x2="845.10" y2="28" stroke="#c8c8c8" stroke-width="1.3"/>
<line x1="860.26" y1="23.5" x2="860.26" y2="28" stroke="#cccccc" stroke-width="1.3"/>
<line x1="875.43" y1="0" x2="875.43" y2="28" stroke="#c2c2c2" stroke-width="1.5"/>
<text x="880.43" y="15.5" font-size="14" fill="#555">14</text>
<line x1="890.59" y1="23.5" x2="890.59" y2="28" stroke="#cccccc" stroke-width="1.3"/>
<line x1="905.75" y1="21" x2="905.75" y2="28" stroke="#c8c8c8" stroke-width="1.3"/>
<line x1="920.92" y1="23.5" x2="920.92" y2="28" stroke="#cccccc" stroke-width="1.3"/>
<line x1="936.08" y1="18" x2="936.08" y2="28" stroke="#c4c4c4" stroke-width="1.3"/>
<line x1="951.24" y1="23.5" x2="951.24" y2="28" stroke="#cccccc" stroke-width="1.3"/>
<line x1="966.41" y1="21" x2="966.41" y2="28" stroke="#c8c8c8" stroke-width="1.3"/>
<line x1="981.57" y1="23.5" x2="981.57" y2="28" stroke="#cccccc" stroke-width="1.3"/>
<line x1="996.73" y1="0" x2="996.73" y2="28" stroke="#c2c2c2" stroke-width="1.5"/>
<text x="1001.73" y="15.5" font-size="14" fill="#555">16</text>
<line x1="1011.89" y1="23.5" x2="1011.89" y2="28" stroke="#cccccc" stroke-width="1.3"/>
<line x1="1027.06" y1="21" x2="1027.06" y2="28" stroke="#c8c8c8" stroke-width="1.3"/>
<line x1="1042.22" y1="23.5" x2="1042.22" y2="28" stroke="#cccccc" stroke-width="1.3"/>
<line x1="1057.38" y1="18" x2="1057.38" y2="28" stroke="#c4c4c4" stroke-width="1.3"/>
<line x1="1072.55" y1="23.5" x2="1072.55" y2="28" stroke="#cccccc" stroke-width="1.3"/>
<line x1="1087.71" y1="21" x2="1087.71" y2="28" stroke="#c8c8c8" stroke-width="1.3"/>
<line x1="1102.87" y1="23.5" x2="1102.87" y2="28" stroke="#cccccc" stroke-width="1.3"/>
<line x1="1118.04" y1="0" x2="1118.04" y2="28" stroke="#c2c2c2" stroke-width="1.5"/>
<text x="1123.04" y="15.5" font-size="14" fill="#555">18</text>
<line x1="1133.20" y1="23.5" x2="1133.20" y2="28" stroke="#cccccc" stroke-width="1.3"/>
<line x1="1148.36" y1="21" x2="1148.36" y2="28" stroke="#c8c8c8" stroke-width="1.3"/>
<line x1="1163.52" y1="23.5" x2="1163.52" y2="28" stroke="#cccccc" stroke-width="1.3"/>
<line x1="1178.69" y1="18" x2="1178.69" y2="28" stroke="#c4c4c4" stroke-width="1.3"/>
<line x1="1193.85" y1="23.5" x2="1193.85" y2="28" stroke="#cccccc" stroke-width="1.3"/></svg>
  <svg style="left:-1px;top:0" width="28" height="700"><line x1="0" y1="27.60" x2="27" y2="27.60" stroke="#c2c2c2" stroke-width="1.5"/>
<text x="0" y="0" font-size="13" fill="#555" transform="translate(5 32.60) rotate(90)">0</text>
<line x1="22.5" y1="42.76" x2="27" y2="42.76" stroke="#cccccc" stroke-width="1.3"/>
<line x1="20" y1="57.93" x2="27" y2="57.93" stroke="#c8c8c8" stroke-width="1.3"/>
<line x1="22.5" y1="73.09" x2="27" y2="73.09" stroke="#cccccc" stroke-width="1.3"/>
<line x1="17" y1="88.25" x2="27" y2="88.25" stroke="#c4c4c4" stroke-width="1.3"/>
<line x1="22.5" y1="103.41" x2="27" y2="103.41" stroke="#cccccc" stroke-width="1.3"/>
<line x1="20" y1="118.58" x2="27" y2="118.58" stroke="#c8c8c8" stroke-width="1.3"/>
<line x1="22.5" y1="133.74" x2="27" y2="133.74" stroke="#cccccc" stroke-width="1.3"/>
<line x1="0" y1="148.90" x2="27" y2="148.90" stroke="#c2c2c2" stroke-width="1.5"/>
<text x="0" y="0" font-size="13" fill="#555" transform="translate(5 153.90) rotate(90)">2</text>
<line x1="22.5" y1="164.07" x2="27" y2="164.07" stroke="#cccccc" stroke-width="1.3"/>
<line x1="20" y1="179.23" x2="27" y2="179.23" stroke="#c8c8c8" stroke-width="1.3"/>
<line x1="22.5" y1="194.39" x2="27" y2="194.39" stroke="#cccccc" stroke-width="1.3"/>
<line x1="17" y1="209.56" x2="27" y2="209.56" stroke="#c4c4c4" stroke-width="1.3"/>
<line x1="22.5" y1="224.72" x2="27" y2="224.72" stroke="#cccccc" stroke-width="1.3"/>
<line x1="20" y1="239.88" x2="27" y2="239.88" stroke="#c8c8c8" stroke-width="1.3"/>
<line x1="22.5" y1="255.04" x2="27" y2="255.04" stroke="#cccccc" stroke-width="1.3"/>
<line x1="0" y1="270.21" x2="27" y2="270.21" stroke="#c2c2c2" stroke-width="1.5"/>
<text x="0" y="0" font-size="13" fill="#555" transform="translate(5 275.21) rotate(90)">4</text>
<line x1="22.5" y1="285.37" x2="27" y2="285.37" stroke="#cccccc" stroke-width="1.3"/>
<line x1="20" y1="300.53" x2="27" y2="300.53" stroke="#c8c8c8" stroke-width="1.3"/>
<line x1="22.5" y1="315.70" x2="27" y2="315.70" stroke="#cccccc" stroke-width="1.3"/>
<line x1="17" y1="330.86" x2="27" y2="330.86" stroke="#c4c4c4" stroke-width="1.3"/>
<line x1="22.5" y1="346.02" x2="27" y2="346.02" stroke="#cccccc" stroke-width="1.3"/>
<line x1="20" y1="361.19" x2="27" y2="361.19" stroke="#c8c8c8" stroke-width="1.3"/>
<line x1="22.5" y1="376.35" x2="27" y2="376.35" stroke="#cccccc" stroke-width="1.3"/>
<line x1="0" y1="391.51" x2="27" y2="391.51" stroke="#c2c2c2" stroke-width="1.5"/>
<text x="0" y="0" font-size="13" fill="#555" transform="translate(5 396.51) rotate(90)">6</text>
<line x1="22.5" y1="406.67" x2="27" y2="406.67" stroke="#cccccc" stroke-width="1.3"/>
<line x1="20" y1="421.84" x2="27" y2="421.84" stroke="#c8c8c8" stroke-width="1.3"/>
<line x1="22.5" y1="437.00" x2="27" y2="437.00" stroke="#cccccc" stroke-width="1.3"/>
<line x1="17" y1="452.16" x2="27" y2="452.16" stroke="#c4c4c4" stroke-width="1.3"/>
<line x1="22.5" y1="467.33" x2="27" y2="467.33" stroke="#cccccc" stroke-width="1.3"/>
<line x1="20" y1="482.49" x2="27" y2="482.49" stroke="#c8c8c8" stroke-width="1.3"/>
<line x1="22.5" y1="497.65" x2="27" y2="497.65" stroke="#cccccc" stroke-width="1.3"/>
<line x1="0" y1="512.82" x2="27" y2="512.82" stroke="#c2c2c2" stroke-width="1.5"/>
<text x="0" y="0" font-size="13" fill="#555" transform="translate(5 517.82) rotate(90)">8</text>
<line x1="22.5" y1="527.98" x2="27" y2="527.98" stroke="#cccccc" stroke-width="1.3"/>
<line x1="20" y1="543.14" x2="27" y2="543.14" stroke="#c8c8c8" stroke-width="1.3"/>
<line x1="22.5" y1="558.31" x2="27" y2="558.31" stroke="#cccccc" stroke-width="1.3"/>
<line x1="17" y1="573.47" x2="27" y2="573.47" stroke="#c4c4c4" stroke-width="1.3"/>
<line x1="22.5" y1="588.63" x2="27" y2="588.63" stroke="#cccccc" stroke-width="1.3"/>
<line x1="20" y1="603.79" x2="27" y2="603.79" stroke="#c8c8c8" stroke-width="1.3"/>
<line x1="22.5" y1="618.96" x2="27" y2="618.96" stroke="#cccccc" stroke-width="1.3"/>
<line x1="0" y1="634.12" x2="27" y2="634.12" stroke="#c2c2c2" stroke-width="1.5"/>
<text x="0" y="0" font-size="13" fill="#555" transform="translate(5 639.12) rotate(90)">10</text>
<line x1="22.5" y1="649.28" x2="27" y2="649.28" stroke="#cccccc" stroke-width="1.3"/>
<line x1="20" y1="664.45" x2="27" y2="664.45" stroke="#c8c8c8" stroke-width="1.3"/>
<line x1="22.5" y1="679.61" x2="27" y2="679.61" stroke="#cccccc" stroke-width="1.3"/></svg>
  <div class="a" style="left:0;top:0;width:1199px;height:2px;background:#c6c6c6"></div>
  <div class="a" style="left:0;top:26.5px;width:1199px;height:2px;background:#cfcfcf"></div>
  <div class="a" style="left:24.5px;top:0;width:1.5px;height:687px;background:#b4b4b4"></div>
  <svg style="left:-73px;top:-190px" width="1600" height="1017" viewBox="0 0 1600 1017">
<defs>
<clipPath id="cpL"><rect x="462" y="274.5" width="113.5" height="247.5"/></clipPath>
<clipPath id="cpRT"><rect x="595.3" y="274.8" width="114.3" height="112.8"/></clipPath>
<clipPath id="cpRB"><rect x="595.3" y="407" width="114.3" height="114.5"/></clipPath>
</defs>
<!-- left white artboard -->
<rect x="123.5" y="263.5" width="330" height="303" fill="#fff" stroke="#5a5a5a" stroke-width="2.2"/>
<!-- pink bottom-left shape -->
<path d="M129 792 L205 716 L349 716 L349 796 Q348 800 340 800 L140 803 Q133 800 129 792 Z" fill="#ef4c78" stroke="#6b2a3a" stroke-width="1.2"/>
<!-- selection handles -->
<line x1="426.3" y1="263" x2="426.3" y2="565.5" stroke="#8a8a8a" stroke-width="1.6"/>
<line x1="416" y1="263" x2="441" y2="263" stroke="#8a8a8a" stroke-width="1.6"/>
<line x1="416" y1="414.6" x2="455" y2="414.6" stroke="#bdbdbd" stroke-width="1.4"/>
<line x1="416" y1="565.5" x2="438" y2="565.5" stroke="#8a8a8a" stroke-width="1.6"/>
<rect x="420.2" y="256.8" width="12" height="12" fill="#f6f6f6" stroke="#9a9a9a" stroke-width="1.4"/>
<rect x="420.2" y="559.3" width="12" height="12" fill="#f6f6f6" stroke="#9a9a9a" stroke-width="1.4"/>
<!-- tooltip -->
<rect x="396" y="220.3" width="57" height="24.5" rx="6" fill="#1f1f1f"/>
<text x="414" y="238.5" letter-spacing="0.7" font-size="15" font-weight="bold" fill="#fff" font-family="Liberation Sans">5 in</text>

<!-- white strip under card -->
<rect x="441" y="540" width="288.5" height="27" fill="#fff" stroke="#9d9d9d" stroke-width="1.2"/>
<!-- navy frame -->
<rect x="442.2" y="566" width="279" height="279" fill="#fff" stroke="#0e2a3f" stroke-width="9.5"/>

<!-- card pink -->
<rect x="440.8" y="252.8" width="288.6" height="288.6" fill="#ef4c78" stroke="#3d1a22" stroke-width="1.6"/>
<rect x="462" y="274.5" width="113.5" height="247.5" fill="#0c2a40" stroke="#3d1a22" stroke-width="1"/>
<rect x="595.3" y="274.8" width="114.3" height="112.8" fill="#0c2a40" stroke="#3d1a22" stroke-width="1"/>
<rect x="595.3" y="407" width="114.3" height="114.5" fill="#0c2a40" stroke="#3d1a22" stroke-width="1"/>
<!-- globe panel -->
<g clip-path="url(#cpL)">
  <path d="M551 277 Q590 320 578 380 Q565 420 486 416" fill="none" stroke="#c46a40" stroke-width="4"/>
  <circle cx="551" cy="278" r="4" fill="#c46a40"/>
  <circle cx="487" cy="416" r="4.5" fill="#c46a40"/>
  <path d="M509 417 L531 417 Q532 432 542 442 L497 442 Q507 432 509 417 Z" fill="#c46a40" stroke="#111" stroke-width="1"/>
  <circle cx="518.8" cy="346" r="60" fill="#fff"/>
  <circle cx="518.8" cy="346" r="55.5" fill="#2f72d3" stroke="#0c2a40" stroke-width="1.2"/>
  <path d="M496 328 Q502 322 512 324 Q518 318 512 312 Q520 300 536 304 Q552 300 566 312 Q578 330 575 352 Q572 364 566 372 Q562 360 556 350 Q552 344 548 348 Q546 356 540 360 Q532 368 526 374 Q516 384 506 386 Q504 376 504 366 Q500 352 494 344 Q492 334 496 328 Z" fill="#3fcb46" stroke="#0c2a40" stroke-width="1.1"/>
  <path d="M520 318 Q530 322 540 318 M528 312 Q534 316 544 314 M541 342 Q543 352 538 362" fill="none" stroke="#2f72d3" stroke-width="2.2"/>
  <path d="M462 324 Q474 322 480 336 Q482 350 472 358 Q465 364 462 362 Z" fill="#3fcb46" stroke="#0c2a40" stroke-width="1"/>
  <path d="M472 436 L498 432 L565 445 L567 462 L518 474 L473 458 Z" fill="#3fcb46" stroke="#111" stroke-width="1.2"/>
  <path d="M498 432 L520 441 L541 442 L531 430 Z" fill="#c46a40"/>
  <path d="M520 458 L562 450 L563 465 L521 474 Z" fill="#f7e36a" stroke="#111" stroke-width="1"/>
  <path d="M465 462 L518 476 L556 468 L554 486 L520 496 L466 484 Z" fill="#d63a12" stroke="#111" stroke-width="1"/>
  <path d="M519 480 L553 473 L553 486 L520 496 Z" fill="#f7e36a" stroke="#111" stroke-width="1"/>
  <path d="M466 486 L520 498 L552 490 L552 522 L466 522 Z" fill="#2f72d3" stroke="#111" stroke-width="1"/>
</g>
<!-- science panel -->
<g clip-path="url(#cpRT)">
  <circle cx="601" cy="292" r="5" fill="#3cc2d6"/>
  <circle cx="597" cy="300" r="4" fill="#3cc2d6"/>
  <circle cx="604" cy="279" r="3" fill="#3cc2d6"/>
  <path d="M592 308 L618 302 L633 386 L607 391 Z" fill="#fff"/>
  <path d="M604 328 L613 326 L621 384 L612 385 Z" fill="#3cc2d6" stroke="#0c2a40" stroke-width="0.8"/>
  <path d="M633 302 H666 V307 H663 V330 L678 377 Q680 389 670 389 H631 Q621 389 624 377 L640 330 V307 H633 Z" fill="#fff"/>
  <path d="M646 308 H657 V332 L671 376 Q672 383 666 383 H636 Q630 383 631 376 L646 332 Z" fill="#0c2a40"/>
  <path d="M640 361 H662 L670 377 Q671 382 666 382 H636 Q631 382 632 377 Z" fill="#f7e36a" stroke="#111" stroke-width="0.8"/>
  <ellipse cx="652" cy="318" rx="2.5" ry="4" fill="#f7e36a"/><ellipse cx="656" cy="340" rx="4" ry="5" fill="#f7e36a"/><circle cx="648" cy="328" r="2.2" fill="#f7e36a"/><ellipse cx="648" cy="354" rx="4" ry="2" fill="#f7e36a"/>
  <path d="M689 338 L701 336 L712 390 L697 390 Z" fill="#c46a40" stroke="#111" stroke-width="1"/>
  <circle cx="688.5" cy="306.5" r="22" fill="#fff"/>
  <path d="M682 324 H696 L699 338 Q694 342 688 340 Z" fill="#fff"/>
  <circle cx="688.5" cy="306.5" r="17" fill="#2f72d3" stroke="#0c2a40" stroke-width="1"/>
</g>
<!-- art panel -->
<g clip-path="url(#cpRB)">
  <ellipse cx="654" cy="450" rx="39" ry="45" transform="rotate(28 654 450)" fill="#c46a40" stroke="#111" stroke-width="1.2"/>
  <path d="M655 418 Q664 410 672 418 Q673 428 660 430 Q650 430 655 418 Z" fill="#f7e36a" stroke="#111" stroke-width="0.8"/>
  <ellipse cx="640" cy="440" rx="8" ry="11" transform="rotate(20 640 440)" fill="#d63a12" stroke="#111" stroke-width="0.8"/>
  <path d="M648 448 Q655 436 665 440 Q666 450 655 457 Q646 460 648 448 Z" fill="#2f72d3" stroke="#111" stroke-width="0.8"/>
  <path d="M670 440 Q680 432 687 440 Q688 452 676 454 Q666 452 670 440 Z" fill="#3fcb46" stroke="#111" stroke-width="0.8"/>
  <path d="M642 470 Q650 460 660 466 Q664 478 652 484 Q640 482 642 470 Z" fill="#3cc2d6" stroke="#111" stroke-width="0.8"/>
  <ellipse cx="670" cy="466" rx="5" ry="4" fill="#2f72d3"/>
  <ellipse cx="664" cy="457" rx="4" ry="3" fill="#d63a12"/>
  <path d="M598 462 L614 460 L624 522 L606 522 Z" fill="#c46a40" stroke="#111" stroke-width="1"/>
  <path d="M596 450 L615 448 L617 462 L598 465 Z" fill="#fff" stroke="#111" stroke-width="0.8"/>
  <path d="M596 450 Q592 432 600 428 Q612 438 615 448 Z" fill="#3fcb46" stroke="#111" stroke-width="0.8"/>
  <path d="M698 440 L708 440 L702 522 L688 522 Z" fill="#c46a40" stroke="#111" stroke-width="1"/>
  <path d="M697 428 L710 428 L709 442 L698 442 Z" fill="#fff" stroke="#111" stroke-width="0.8"/>
  <path d="M699 428 Q700 418 708 415 L711 428 Z" fill="#d63a12"/>
</g>

<!-- envelope -->
<mask id="envm" maskUnits="userSpaceOnUse" x="700" y="200" width="600" height="600"><rect x="700" y="200" width="600" height="600" fill="#fff"/><g fill="#000"><ellipse cx="1167.5" cy="667" rx="28.5" ry="37"/>
<path d="M1177 622 Q1178 614 1184 616 Q1192 622 1191 632 L1236 690 Q1238 696 1232 694 L1187 636 Q1178 632 1177 622 Z"/>
<path d="M1120 687 Q1134 684 1146 694 Q1150 700 1156 704 L1192 726 Q1198 734 1190 736 L1152 710 Q1144 706 1138 706 Q1126 700 1120 687 Z"/></g></mask>
<path d="M770 266 L987.6 266 L1008.4 289 L1222 289 Q1233 289 1233 300 L1233 514 L1253.6 534.4 L1253.6 748 Q1253.6 758 1243 758 L1026.7 758 L1005.8 737.4 L792 737.4 Q782 737.4 782 727 L782 513.2 L762 491 L762 276 Q762 266 772 266 Z" fill="#fbd98a" stroke="#4a4336" stroke-width="1.5" mask="url(#envm)"/>
<g fill="none" stroke="#4a4336" stroke-width="1.3"><ellipse cx="1167.5" cy="667" rx="28.5" ry="37"/>
<path d="M1177 622 Q1178 614 1184 616 Q1192 622 1191 632 L1236 690 Q1238 696 1232 694 L1187 636 Q1178 632 1177 622 Z"/>
<path d="M1120 687 Q1134 684 1146 694 Q1150 700 1156 704 L1192 726 Q1198 734 1190 736 L1152 710 Q1144 706 1138 706 Q1126 700 1120 687 Z"/></g>
<g fill="none" stroke="#4a3d1e" stroke-width="2" stroke-dasharray="21.5 23.3">
<path d="M1008 289 L782 512.2" stroke-dashoffset="9.5"/><path d="M782 512.2 L1007 737.2" stroke-dashoffset="11"/><path d="M1007 737.2 L1232.7 513.9"/><path d="M1232.7 513.9 L1008 289" stroke-dashoffset="3"/>
</g>
</svg>
<!-- zoom control -->
<div class="a" style="left:35px;top:620px;width:122px;height:37px;border-radius:18.5px;background:rgba(0,0,0,0.055)"></div>
<svg style="left:43px;top:627px" width="24" height="24" viewBox="0 0 24 24"><circle cx="11.7" cy="11" r="9.8" fill="none" stroke="#c9c9c9" stroke-width="1.6"/><path d="M6.5 11 H17" stroke="#c9c9c9" stroke-width="1.8"/></svg>
<div class="t" style="left:73.5px;top:628px;font-size:21px;color:#c2c2c2;-webkit-text-stroke:0.4px #c2c2c2">75%</div>
<svg style="left:126px;top:627px" width="24" height="24" viewBox="0 0 24 24"><circle cx="11.6" cy="11" r="9.8" fill="none" stroke="#c9c9c9" stroke-width="1.6"/><path d="M6.5 11 H16.7 M11.6 6 V16" stroke="#c9c9c9" stroke-width="1.6"/></svg>

</div>
<div class="a" style="left:0;top:877px;width:1598px;height:2.6px;background:#0a0a0a"></div>
<svg style="left:0;top:870px" width="10" height="10" viewBox="0 870 10 10"><path d="M0 872.5 Q1.5 877 7 877.2 L0 877.5 Z" fill="#111"/></svg>

<!-- RIGHT PANEL -->
<div class="a" style="left:1272px;top:137px;width:326px;height:740px;background:#fff"></div>
<div class="a" style="left:1271px;top:137px;width:1.2px;height:740px;background:#e9e9e9"></div>
<svg style="left:1272px;top:137px" width="326" height="740" viewBox="1272 137 326 740" font-family="Liberation Sans">
<text x="1291.5" y="168.5" font-size="16" font-weight="bold" fill="#2d7d5a">Layers</text>
<text x="1375.5" y="168.5" font-size="16" fill="#333">Color Sync</text>
<rect x="1273" y="188" width="325" height="1.3" fill="#e2e2e2"/>
<rect x="1273" y="185.5" width="84" height="3" fill="#227a52"/>
<!-- icons row -->
<g fill="none" stroke-width="1.6">
  <path d="M1295 209 V206 H1298 M1312 206 H1315 V209 M1315 222 V225 H1312 M1298 225 H1295 V222" stroke="#d8d8d8"/>
  <rect x="1299.5" y="209.5" width="8" height="8" stroke="#d8d8d8"/>
  <rect x="1303" y="213" width="8" height="8" stroke="#d8d8d8"/>
  <rect x="1339.5" y="206" width="14" height="14" rx="1.5" stroke="#333"/>
  <rect x="1343.5" y="210" width="15" height="15" rx="1.5" fill="#fff" stroke="#333"/>
  <path d="M1351 213.5 V221.5 M1347 217.5 H1355" stroke="#333"/>
  <path d="M1383.5 209.5 H1404.5 M1390 209 V206 H1398 V209" stroke="#333"/>
  <path d="M1385.5 210 L1387 224 Q1387.5 226 1389.5 226 H1398.5 Q1400.5 226 1401 224 L1402.5 210" stroke="#333"/>
  <path d="M1391.5 214 V221 M1396.5 214 V221" stroke="#333"/>
</g>
<rect x="1273" y="242.5" width="325" height="1.3" fill="#ebebeb"/>
<!-- layers -->
<g font-size="15.3" fill="#333" letter-spacing="0.4">
  <text x="1349.5" y="270">classroomlayeredcard-TBH</text>
  <text x="1349.5" y="335">classroomlayeredcard-TBH</text>
  <text x="1349.5" y="400">classroomlayeredcard-TBH</text>
  <text x="1349.5" y="465">classroomlayeredcard-TBH</text>
  <text x="1349.5" y="530">classroomlayeredcard-TBH</text>
  <text x="1349.5" y="606">classroomlayeredcard-TBH</text>
</g>
<g font-size="15.3" fill="#777" letter-spacing="0.35">
  <text x="1349.5" y="292.5">Basic Cut</text>
  <text x="1349.5" y="357.5">Basic Cut</text>
  <text x="1349.5" y="422.5">Basic Cut</text>
  <text x="1349.5" y="487.5">Basic Cut</text>
  <text x="1349.5" y="552.5">Basic Cut</text>
</g>
<!-- thumbnails -->
<g>
<rect x="1314" y="262" width="26" height="26" fill="#b23a22"/>
<rect x="1316.5" y="264.5" width="21" height="21" fill="#6d6d6d" opacity="0.55"/>
<circle cx="1321" cy="270" r="4.6" fill="#b23a22"/><circle cx="1321.5" cy="280.5" r="4.6" fill="#b23a22"/><circle cx="1332.5" cy="276" r="5" fill="#b23a22"/>
<rect x="1326" y="265.5" width="4" height="3" fill="#f2f2f2"/><rect x="1330.5" y="282" width="5" height="2.5" fill="#f2f2f2"/><rect x="1334" y="267" width="2.5" height="4" fill="#f2f2f2"/>
<rect x="1314" y="327" width="26" height="26" fill="#2a62b8"/>
<rect x="1316.5" y="329.5" width="21" height="21" fill="#6d6d6d" opacity="0.55"/>
<circle cx="1321" cy="335" r="4.6" fill="#2a62b8"/><circle cx="1321.5" cy="345.5" r="4.6" fill="#2a62b8"/><circle cx="1332.5" cy="341" r="5" fill="#2a62b8"/>
<rect x="1326" y="330.5" width="4" height="3" fill="#f2f2f2"/><rect x="1330.5" y="347" width="5" height="2.5" fill="#f2f2f2"/><rect x="1334" y="332" width="2.5" height="4" fill="#f2f2f2"/>
<rect x="1314" y="392" width="26" height="26" fill="#e5dc5a"/>
<rect x="1316.5" y="394.5" width="21" height="21" fill="#6d6d6d" opacity="0.55"/>
<circle cx="1321" cy="400" r="4.6" fill="#e5dc5a"/><circle cx="1321.5" cy="410.5" r="4.6" fill="#e5dc5a"/><circle cx="1332.5" cy="406" r="5" fill="#e5dc5a"/>
<rect x="1326" y="395.5" width="4" height="3" fill="#f2f2f2"/><rect x="1330.5" y="412" width="5" height="2.5" fill="#f2f2f2"/><rect x="1334" y="397" width="2.5" height="4" fill="#f2f2f2"/>
<rect x="1314" y="457" width="26" height="26" fill="#3cc0cf"/>
<rect x="1316.5" y="459.5" width="21" height="21" fill="#6d6d6d" opacity="0.55"/>
<circle cx="1321" cy="465" r="4.6" fill="#3cc0cf"/><circle cx="1321.5" cy="475.5" r="4.6" fill="#3cc0cf"/><circle cx="1332.5" cy="471" r="5" fill="#3cc0cf"/>
<rect x="1326" y="460.5" width="4" height="3" fill="#f2f2f2"/><rect x="1330.5" y="477" width="5" height="2.5" fill="#f2f2f2"/><rect x="1334" y="462" width="2.5" height="4" fill="#f2f2f2"/>
<rect x="1314" y="522" width="26" height="26" fill="#0d2b42"/>
</g>
<!-- group row -->
<path d="M1290.5 597 L1295.5 602 L1300.5 597" fill="none" stroke="#444" stroke-width="1.6"/>
<rect x="1314.5" y="594.5" width="25" height="13" rx="1.5" fill="none" stroke="#999" stroke-width="1.3"/>
<path d="M1327 594.5 V607.5" stroke="#999" stroke-width="1.3"/>
<!-- selected row -->
<rect x="1273" y="633.5" width="325" height="63" fill="#aee9d7"/>
<path d="M1363.5 651.5 V676.5" stroke="#6f9e90" stroke-width="1.5"/>
<text x="1385.5" y="658.5" font-size="15.3" font-weight="bold" fill="#1f3a33">classroomlayeredcar...</text>
<text x="1385.5" y="681" font-size="15.3" fill="#4f7a6d">Basic Cut</text>
<!-- blank canvas -->
<rect x="1273" y="708" width="325" height="55" fill="#f1f1f1"/>
<rect x="1284.5" y="714.5" width="58.5" height="40" rx="2" fill="#fff" stroke="#a6a6a6" stroke-width="1.2"/>
<text x="1355" y="739" font-size="11" fill="#333">Blank Canvas</text>
<!-- bottom tools -->
<g font-size="11" text-anchor="middle">
  <text x="1311" y="807" fill="#cfcfcf">Slice</text>
  <text x="1377.5" y="807" fill="#cfcfcf">Combine</text>
  <text x="1441" y="807" fill="#333">Attach</text>
  <text x="1505" y="807" fill="#333">Flatten</text>
  <text x="1571" y="807" fill="#cfcfcf">Contour</text>
</g>
<g fill="none" stroke-width="1.6">
  <path d="M1305 787 H1303 Q1301.5 787 1301.5 785.5 V775 Q1301.5 773.5 1303 773.5 H1313.5 Q1315 773.5 1315 775 V777" stroke="#cfcfcf"/>
  <rect x="1307" y="779" width="13.5" height="13" rx="1.5" stroke="#cfcfcf"/>
  <path d="M1307 783 L1313 779.5" stroke="#cfcfcf"/>
  <rect x="1362" y="769.5" width="12" height="12" rx="1.5" stroke="#cfcfcf"/>
  <circle cx="1374.5" cy="783" r="7.3" stroke="#cfcfcf"/>
  <path d="M1389 778.5 H1395 L1392 782 Z" fill="#cfcfcf" stroke="none"/>
  <path d="M1446.5 776 H1436 Q1431.5 776 1431.5 779.5 Q1431.5 783 1436 783 H1447 Q1450.5 783 1450.5 780 Q1450.5 777.5 1447 777.5 H1437.5 Q1435 777.5 1435 779.5 Q1435 781.5 1437.5 781.5 H1445" stroke="#222" stroke-width="1.7"/>
  <path d="M1505 768.5 V776 M1501.5 773 L1505 776.5 L1508.5 773" stroke="#222" stroke-width="1.6"/>
  <path d="M1498 775 L1495.5 778 L1505 784.5 L1514.5 778 L1512 775 M1495.5 782.5 L1505 789.5 L1514.5 782.5" stroke="#222" stroke-width="1.7" stroke-linejoin="round"/>
  <circle cx="1571.5" cy="780" r="10" stroke="#d5d5d5" stroke-dasharray="4 3"/>
</g>
<!-- banner -->
<rect x="1273" y="817" width="325" height="60" fill="#dfe9f8"/>
<text x="1291" y="852" font-size="16" fill="#222" letter-spacing="0.3">Here come the summer projects!</text>
<g transform="translate(1547 846)">
  <path d="M0 -9 V9 M-9 0 H9 M-6.4 -6.4 L6.4 6.4 M-6.4 6.4 L6.4 -6.4" stroke="#e5a43a" stroke-width="1.6"/>
  <circle r="6" fill="#f5b21d"/>
  <circle r="4" cy="-1" fill="#fcd24a"/>
</g>
<path d="M1590 842 L1597 849 M1597 842 L1590 849" stroke="#fff" stroke-width="1.6"/>
</svg>


<!-- MENU -->
<div class="a" style="left:192px;top:182px;width:225px;height:596px;background:#fff;border-radius:0 0 8px 8px;box-shadow:0 3px 22px rgba(0,0,0,0.13),0 0 2px rgba(0,0,0,0.06);clip-path:inset(0 -40px -40px -40px)"></div>
<div class="a" style="left:202px;top:238px;width:205px;height:34px;border-radius:9px;background:#e7f6f1"></div>
<div class="a" style="left:202px;top:500px;width:207px;height:37px;border-radius:8px;background:#f2f2f2"></div>
<div class="a" style="left:192px;top:368px;width:225px;height:1.5px;background:#e8e8e8"></div>
<div class="a" style="left:192px;top:631.5px;width:225px;height:1.5px;background:#e8e8e8"></div>
<div class="a" style="left:192px;top:704.5px;width:225px;height:1.5px;background:#e8e8e8"></div>
<svg style="left:192px;top:182px" width="225" height="596" viewBox="192 182 225 596" font-family="Liberation Sans">
<g font-size="16" fill="#2a2a2a">
  <text x="246" y="222.5" font-weight="bold" fill="#1e1e1e">Cut</text>
  <text x="246" y="260.5" font-weight="bold" fill="#2d7d5a">Basic</text>
  <text x="246" y="298.5">Wavy</text>
  <text x="246" y="336.5">Perforate</text>
  <text x="246" y="409.5" font-weight="bold" fill="#1e1e1e">Draw</text>
  <text x="246" y="447.5">Pen</text>
  <text x="246" y="486">Foil</text>
  <text x="246" y="524.5">Score</text>
  <text x="246" y="562.5">Deboss</text>
  <text x="246" y="600.5">Engrave</text>
  <text x="282" y="673.5">Print Then Cut</text>
  <text x="282" y="746.5">Guide</text>
</g>
<!-- scissors -->
<g fill="none" stroke="#222" stroke-width="1.8">
  <circle cx="230.5" cy="211.5" r="3.8"/>
  <circle cx="230.5" cy="222.5" r="3.8"/>
  <path d="M226.8 213 L213 220 Q216 222.5 221 221 L227 219 M226.8 221 L213 214 Q216 211.5 221 213 L227 215"/>
</g>
<!-- check -->
<path d="M216.5 255 L222.5 261 L232 249.5" fill="none" stroke="#2d7d5a" stroke-width="1.8" stroke-linecap="round"/>
<!-- draw pencil -->
<path d="M213.5 413.5 L215 406.5 L227 394.5 Q229 393 231 395 Q233 397 231.5 399 L219.5 411 Z M219.5 411 H234" fill="none" stroke="#222" stroke-width="1.7" stroke-linejoin="round" stroke-linecap="round"/>
<!-- foil arrow -->
<path d="M391.5 477.5 L396.5 481 L391.5 484.5 Z" fill="#222"/>
<!-- printer -->
<g fill="none" stroke="#222" stroke-width="1.7" stroke-linejoin="round">
  <path d="M253.5 666.5 V657.5 H262.5 L266 661 V666.5"/>
  <path d="M262 657.5 V661.5 H266" stroke-width="1.1"/>
  <rect x="248.5" y="666.5" width="22" height="10" rx="2.5"/>
  <rect x="253.5" y="672" width="12.5" height="7.5" rx="0.8" fill="#fff"/>
</g>
<!-- guide -->
<path d="M254 732 V751 M264.5 732 V751 M249 736.5 H270 M249 746.5 H270" fill="none" stroke="#222" stroke-width="1.8"/>
<!-- hand cursor -->
<g transform="translate(361 503) scale(0.8)">
<path d="M4 2 Q4 0 6 0 Q8 0 8 2 V9 Q9 7.5 10.5 8 Q12 8.5 12 10 Q13 8.5 14.5 9 Q16 9.5 16 11 Q17 10 18 10.5 Q19.5 11 19.5 13 V18 Q19.5 22 17 24 H8 Q6 22 4 19 L1 14 Q0 12 1.5 11.5 Q3 11 4 12.5 Z" fill="#fff" stroke="#111" stroke-width="1.3" stroke-linejoin="round"/>
<path d="M10.5 16 V20 M13.5 16 V20 M16.5 16 V20" stroke="#111" stroke-width="0.9"/>
</g>
</svg>


<!-- ARROWS -->
<svg style="left:0;top:0" width="1600" height="1017" viewBox="0 0 1600 1017"><!-- arrows -->
<path d="M381.5 515.5 L451.5 430.5 L477.7 452 L447 492 L571 480.6 L574 513.7 L450.6 527.3 L489 560.4 L468.3 586.5 Z" fill="#9c5e0b"/>
<path d="M1127 637 L1250 653 L1221 612 L1249 591.5 L1316 681 L1227.4 748 L1205.3 720 L1245 690 L1123 670 Z" fill="#9c5e0b"/>
</svg>

<!-- LOGO -->
<svg style="left:1400px;top:920px" width="200" height="90" viewBox="1400 920 200 90" font-family="Liberation Sans">
<text x="0" y="0" font-size="10" fill="#8596ad" transform="translate(1427.5 955) rotate(-90)">the</text>
<text x="1428.5" y="954.7" font-size="26.5" fill="#3d4b6e" textLength="117.5" lengthAdjust="spacingAndGlyphs" stroke="#3d4b6e" stroke-width="0.5">BEARDED</text>
<text x="1419.5" y="979" font-size="28.5" font-weight="bold" fill="#9a5e17" stroke="#9a5e17" stroke-width="0.9" textLength="162" lengthAdjust="spacingAndGlyphs">HOUSEWIFE</text>
<path d="M1560.5 978.5 Q1566 986 1572 987 Q1578 986 1585 981 Q1587 978 1587.5 974 Q1590.5 978 1589.5 989 Q1588 997 1580 999.5 Q1572 1000.5 1566 995 Q1561 988 1560.5 978.5 Z M1570 991.5 Q1574 988 1580.5 989.5 Q1577 993.5 1572 993.5 Z" fill="#111" fill-rule="evenodd"/>
</svg>

</body></html>
